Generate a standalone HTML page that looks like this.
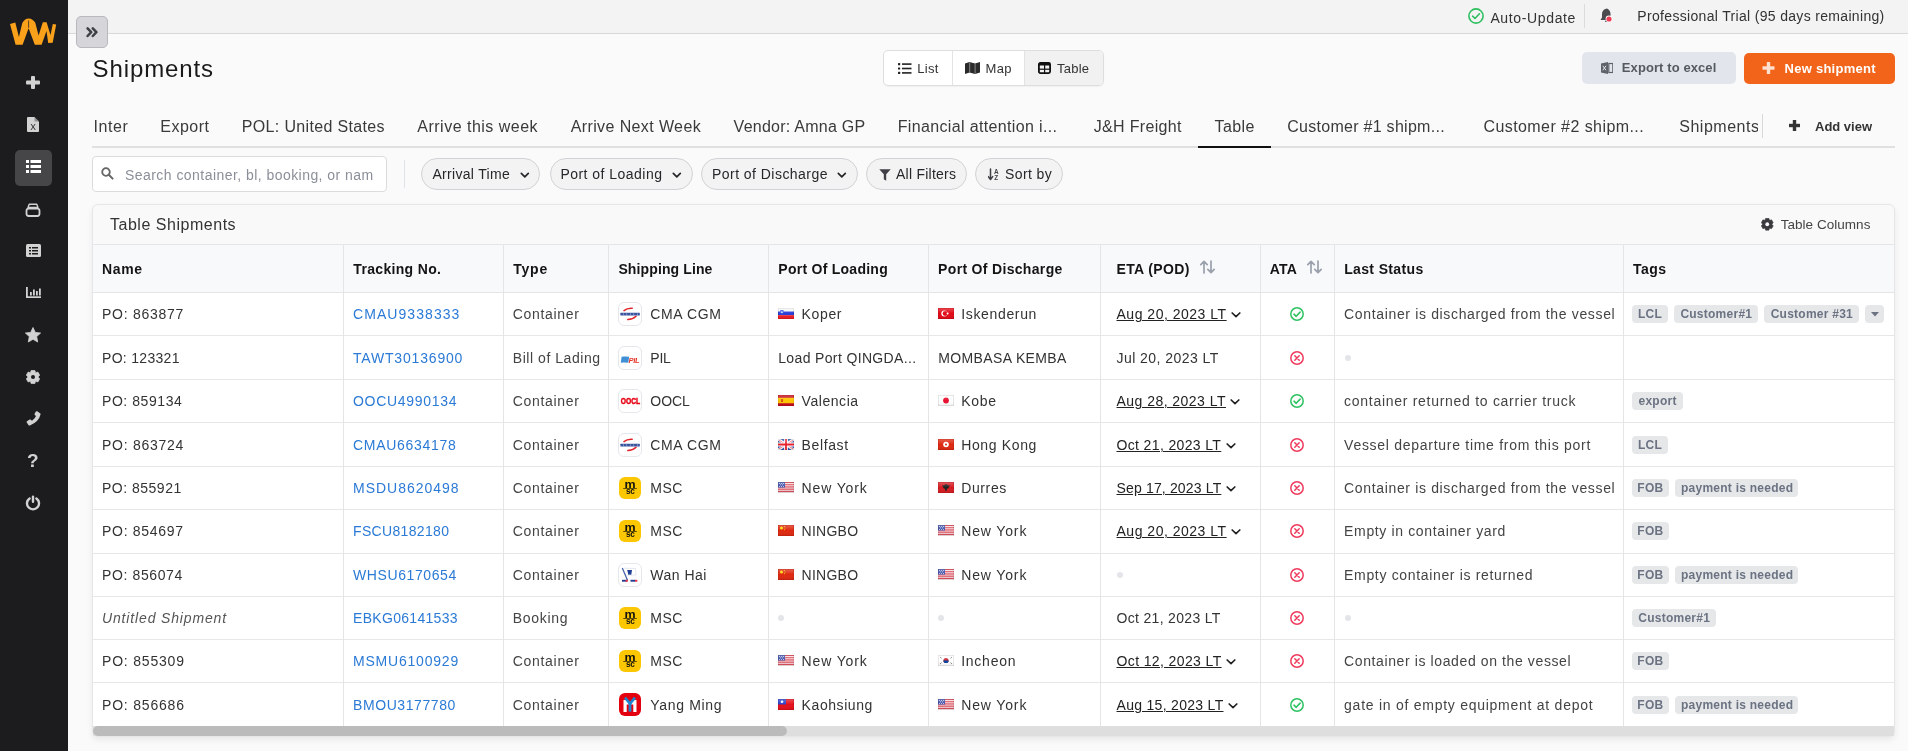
<!DOCTYPE html><html><head><meta charset="utf-8"><title>Shipments</title><style>
html,body{margin:0;padding:0}
body{width:1908px;height:751px;overflow:hidden;position:relative;background:#fafafa;font-family:"Liberation Sans",sans-serif;}
.t{position:absolute;white-space:nowrap}
#wrap{position:absolute;left:0;top:0;width:1908px;height:751px;will-change:transform}
svg{display:block}
</style></head><body><div id="wrap"><svg width="0" height="0" style="position:absolute"><defs><linearGradient id="gl" x1="0" y1="0" x2="0" y2="1"><stop offset="0" stop-color="#fff" stop-opacity="0.25"/><stop offset="0.5" stop-color="#fff" stop-opacity="0"/><stop offset="1" stop-color="#000" stop-opacity="0.08"/></linearGradient></defs></svg>
<div style="position:absolute;left:0px;top:0px;width:68px;height:751px;background:#1c1c1e;"></div>
<svg style="position:absolute;left:0px;top:0px;" width="68" height="60" viewBox="0 0 68 60"><path d="M10 24 L15.3 22.6 L18.9 37 L22.3 23 Q24.5 18.6 28.6 18.4 Q32.8 18.6 35.2 22.6 L38.6 35.6 L42.8 22.2 L46.6 22.2 L50.5 35 L52.8 24 L56.2 24.5 L52.7 42.8 L48.2 43 L46.5 31 L41.6 44.8 L34.8 44.8 L28.6 28.2 L22.6 44.8 L15.6 44.8 Z" fill="#f9a11b"/><path d="M28.6 20.4 V27.8" stroke="#1c1c1e" stroke-width="0.7"/></svg>
<svg style="position:absolute;left:26px;top:76px;" width="14" height="13" viewBox="0 0 14 13"><rect x="5" y="0" width="4" height="13" rx="1" fill="#d2d2d2"/><rect x="0" y="4.5" width="14" height="4" rx="1" fill="#d2d2d2"/></svg>
<svg style="position:absolute;left:27px;top:117px;" width="12" height="15" viewBox="0 0 12 15"><path d="M0 1 Q0 0 1 0 H7.5 L12 4.5 V14 Q12 15 11 15 H1 Q0 15 0 14 Z" fill="#d2d2d2"/><path d="M7.5 0 V4.5 H12" fill="#1c1c1e" opacity="0.35"/><text x="6" y="13" font-size="8.5" text-anchor="middle" fill="#1c1c1e" font-family="Liberation Sans">X</text></svg>
<div style="position:absolute;left:15px;top:150px;width:37px;height:36px;background:#464648;border-radius:5px;"></div>
<svg style="position:absolute;left:26px;top:160px;" width="15" height="13" viewBox="0 0 15 13"><rect x="0" y="0" width="3" height="3" fill="#fff"/><rect x="4.5" y="0" width="10.5" height="3" fill="#fff"/><rect x="0" y="5" width="3" height="3" fill="#fff"/><rect x="4.5" y="5" width="10.5" height="3" fill="#fff"/><rect x="0" y="10" width="3" height="3" fill="#fff"/><rect x="4.5" y="10" width="10.5" height="3" fill="#fff"/></svg>
<svg style="position:absolute;left:25px;top:203px;" width="16" height="14" viewBox="0 0 16 14"><path d="M4.2 1.3 H11.8 L13 4.4 H3 Z" stroke="#d2d2d2" stroke-width="1.4" fill="none" stroke-linejoin="round"/><rect x="1.5" y="5.6" width="13" height="7.4" rx="2.2" stroke="#d2d2d2" stroke-width="1.8" fill="none"/></svg>
<svg style="position:absolute;left:26px;top:244px;" width="15" height="13" viewBox="0 0 15 13"><rect x="0" y="0" width="15" height="13" rx="1.5" fill="#d2d2d2"/><g fill="#1c1c1e"><rect x="3" y="3" width="2" height="1.5"/><rect x="6" y="3" width="6" height="1.5"/><rect x="3" y="6" width="2" height="1.5"/><rect x="6" y="6" width="6" height="1.5"/><rect x="3" y="9" width="2" height="1.5"/><rect x="6" y="9" width="6" height="1.5"/></g></svg>
<svg style="position:absolute;left:26px;top:287px;" width="15" height="11" viewBox="0 0 15 11"><g fill="#d2d2d2"><rect x="0" y="0" width="1.8" height="11"/><rect x="0" y="9.3" width="15" height="1.7"/><rect x="4" y="5" width="1.8" height="3.5"/><rect x="7" y="2.5" width="1.8" height="6"/><rect x="10" y="4" width="1.8" height="4.5"/><rect x="13" y="1.5" width="1.8" height="7"/></g></svg>
<svg style="position:absolute;left:25px;top:327px;" width="16" height="16" viewBox="0 0 16 16"><path d="M8 0.5 L10.3 5.4 L15.6 6 L11.7 9.6 L12.7 15 L8 12.3 L3.3 15 L4.3 9.6 L0.4 6 L5.7 5.4 Z" fill="#d2d2d2" stroke="#d2d2d2" stroke-width="0.8" stroke-linejoin="round"/></svg>
<svg style="position:absolute;left:26px;top:370px;" width="14" height="14" viewBox="0 0 14 14"><polygon points="5.20,0.24 8.80,0.24 9.40,2.16 9.99,2.50 11.96,2.06 13.76,5.18 12.39,6.66 12.39,7.34 13.76,8.82 11.96,11.94 9.99,11.50 9.40,11.84 8.80,13.76 5.20,13.76 4.60,11.84 4.01,11.50 2.04,11.94 0.24,8.82 1.61,7.34 1.61,6.66 0.24,5.18 2.04,2.06 4.01,2.50 4.60,2.16" fill="#d2d2d2" stroke="#d2d2d2" stroke-width="0.6" stroke-linejoin="round"/><circle cx="7" cy="7" r="2" fill="#1c1c1e"/></svg>
<svg style="position:absolute;left:26px;top:411px;" width="15" height="16" viewBox="0 0 15 16"><path d="M14 2.2 L11.2 0.3 Q10.4 -0.1 9.9 0.6 L8.6 2.8 Q8.3 3.5 8.8 4 L10 5 Q9.2 7.6 6 9.8 L4.8 8.7 Q4.2 8.2 3.6 8.6 L1 10.2 Q0.3 10.8 0.8 11.5 L2.6 14.2 Q3.1 14.8 3.9 14.5 Q13 10.5 14.6 3.2 Q14.7 2.6 14 2.2 Z" fill="#d2d2d2"/></svg>
<div class="t" style="left:27px;top:449px;font-size:19px;line-height:24px;font-weight:700;color:#d2d2d2;">?</div>
<svg style="position:absolute;left:25px;top:495px;" width="16" height="16" viewBox="0 0 16 16"><path d="M4.6 3.4 A6 6 0 1 0 11.4 3.4" fill="none" stroke="#d2d2d2" stroke-width="2.4" stroke-linecap="round"/><rect x="6.8" y="0.5" width="2.4" height="7.5" rx="1.2" fill="#d2d2d2"/></svg>
<div style="position:absolute;left:68px;top:0px;width:1840px;height:33px;background:#f3f3f3;border-bottom:1px solid #d8d8d8;"></div>
<div style="position:absolute;left:76px;top:16px;width:30px;height:30px;background:#d6d6da;border:1px solid #b9b9bd;border-radius:5px;"></div>
<svg style="position:absolute;left:85.5px;top:27px;" width="13" height="11" viewBox="0 0 13 11"><path d="M1.6 1.4 L5.2 5.2 L1.6 9 M6.8 1.4 L10.4 5.2 L6.8 9" fill="none" stroke="#3f3f46" stroke-width="2.5" stroke-linecap="round" stroke-linejoin="round"/></svg>
<svg style="position:absolute;left:1468px;top:8px;" width="16" height="16" viewBox="0 0 16 16"><circle cx="8" cy="8" r="7.1" fill="none" stroke="#2fbf5f" stroke-width="1.6"/><path d="M4.6 8.2 L7 10.5 L11.4 5.8" fill="none" stroke="#2fbf5f" stroke-width="1.6" stroke-linecap="round" stroke-linejoin="round"/></svg>
<div class="t" style="left:1490.40px;top:7.65px;font-size:14px;line-height:20px;color:#333;letter-spacing:0.639px;">Auto-Update</div>
<div style="position:absolute;left:1584px;top:4px;width:1px;height:24px;background:#dcdcdc;"></div>
<svg style="position:absolute;left:1600px;top:8px;" width="14" height="16" viewBox="0 0 14 16"><path d="M6 0.8 L7 0.4 Q10.5 2 10.5 6 V9.5 L12 12 H0.5 L2 9.5 V6 Q2 2.2 6 0.8 Z" fill="#4a4a4f"/><rect x="5" y="12.4" width="2.6" height="1.6" rx="0.8" fill="#4a4a4f"/><circle cx="9" cy="11" r="3.4" fill="#fff"/><circle cx="9" cy="11" r="2.6" fill="#ef3c55"/></svg>
<div class="t" style="left:1637.30px;top:6.45px;font-size:14px;line-height:20px;color:#333;letter-spacing:0.324px;">Professional Trial (95 days remaining)</div>
<div class="t" style="left:92.60px;top:51.68px;font-size:24px;line-height:34px;color:#1a1a1a;letter-spacing:0.889px;">Shipments</div>
<div style="position:absolute;left:883px;top:50px;width:219px;height:34px;border:1px solid #dedede;border-radius:5px;background:#fff;overflow:hidden;box-shadow:0 1px 1px rgba(0,0,0,0.04)"><div style="position:absolute;left:68px;top:0;width:1px;height:34px;background:#e3e3e3"></div><div style="position:absolute;left:140px;top:0;width:79px;height:34px;background:#f1f1f1;border-left:1px solid #e3e3e3"></div></div>
<svg style="position:absolute;left:898px;top:63px;" width="14" height="11" viewBox="0 0 14 11"><g fill="#222"><rect x="0" y="0" width="2.2" height="2.2" rx="0.5"/><rect x="0" y="4.4" width="2.2" height="2.2" rx="0.5"/><rect x="0" y="8.8" width="2.2" height="2.2" rx="0.5"/><rect x="4" y="0.3" width="9.5" height="1.6"/><rect x="4" y="4.7" width="9.5" height="1.6"/><rect x="4" y="9.1" width="9.5" height="1.6"/></g></svg>
<div class="t" style="left:917.30px;top:59.50px;font-size:13px;line-height:18px;color:#333;letter-spacing:0.257px;">List</div>
<svg style="position:absolute;left:965px;top:62px;" width="15" height="12" viewBox="0 0 15 12"><path d="M0 1.5 L4.5 0 L10 1.5 L15 0 V10.5 L10 12 L4.5 10.5 L0 12 Z" fill="#2a2a2a"/><rect x="4.2" y="0.5" width="1" height="10.5" fill="#888"/><rect x="9.6" y="1.2" width="1" height="10.5" fill="#888"/></svg>
<div class="t" style="left:985.50px;top:59.50px;font-size:13px;line-height:18px;color:#333;letter-spacing:0.355px;">Map</div>
<svg style="position:absolute;left:1038px;top:62px;" width="13" height="12" viewBox="0 0 13 12"><rect x="0.9" y="0.9" width="11.2" height="10.2" rx="1.5" fill="none" stroke="#111" stroke-width="1.8"/><rect x="0.9" y="0.9" width="11.2" height="2.6" fill="#111"/><rect x="6" y="3" width="1.2" height="8" fill="#111"/><rect x="1" y="6.6" width="11" height="1.2" fill="#111"/></svg>
<div class="t" style="left:1057.00px;top:59.50px;font-size:13px;line-height:18px;color:#333;letter-spacing:0.230px;">Table</div>
<div style="position:absolute;left:1582px;top:52px;width:154px;height:32px;background:#e2e6ec;border-radius:5px;"></div>
<svg style="position:absolute;left:1601px;top:62px;" width="12" height="12" viewBox="0 0 12 12"><path d="M0 1.5 L7 0 V12 L0 10.5 Z" fill="#5f6368"/><path d="M1.8 3.8 L5 8.3 M5 3.8 L1.8 8.3" stroke="#e2e6ec" stroke-width="1"/><rect x="7.8" y="1.5" width="4" height="9" fill="none" stroke="#5f6368" stroke-width="1.2"/></svg>
<div class="t" style="left:1621.80px;top:58.90px;font-size:13px;line-height:18px;color:#555a61;letter-spacing:0.093px;font-weight:700;">Export to excel</div>
<div style="position:absolute;left:1744px;top:53px;width:151px;height:31px;background:#f26419;border-radius:5px;"></div>
<svg style="position:absolute;left:1762px;top:62px;" width="13" height="12" viewBox="0 0 13 12"><rect x="4.8" y="0" width="3.4" height="12" fill="#fde0d0"/><rect x="0.5" y="4.3" width="12" height="3.4" fill="#fde0d0"/></svg>
<div class="t" style="left:1784.50px;top:59.50px;font-size:13px;line-height:18px;color:#fff;letter-spacing:0.261px;font-weight:700;">New shipment</div>
<div style="position:absolute;left:92px;top:146px;width:1803px;height:2px;background:#e0e0e0;"></div>
<div class="t" style="left:93.60px;top:116.46px;font-size:16px;line-height:22px;color:#3a3a3a;letter-spacing:0.546px;">Inter</div>
<div class="t" style="left:160.30px;top:116.46px;font-size:16px;line-height:22px;color:#3a3a3a;letter-spacing:0.492px;">Export</div>
<div class="t" style="left:241.80px;top:116.46px;font-size:16px;line-height:22px;color:#3a3a3a;letter-spacing:0.338px;">POL: United States</div>
<div class="t" style="left:417.30px;top:116.46px;font-size:16px;line-height:22px;color:#3a3a3a;letter-spacing:0.492px;">Arrive this week</div>
<div class="t" style="left:570.70px;top:116.46px;font-size:16px;line-height:22px;color:#3a3a3a;letter-spacing:0.388px;">Arrive Next Week</div>
<div class="t" style="left:733.60px;top:116.46px;font-size:16px;line-height:22px;color:#3a3a3a;letter-spacing:0.251px;">Vendor: Amna GP</div>
<div class="t" style="left:897.70px;top:116.46px;font-size:16px;line-height:22px;color:#3a3a3a;letter-spacing:0.352px;">Financial attention i...</div>
<div class="t" style="left:1093.70px;top:116.46px;font-size:16px;line-height:22px;color:#3a3a3a;letter-spacing:0.333px;">J&amp;H Freight</div>
<div class="t" style="left:1214.60px;top:116.46px;font-size:16px;line-height:22px;color:#3a3a3a;letter-spacing:0.362px;">Table</div>
<div class="t" style="left:1287.20px;top:116.46px;font-size:16px;line-height:22px;color:#3a3a3a;letter-spacing:0.281px;">Customer #1 shipm...</div>
<div class="t" style="left:1483.40px;top:116.46px;font-size:16px;line-height:22px;color:#3a3a3a;letter-spacing:0.434px;">Customer #2 shipm...</div>
<div style="position:absolute;left:1679.3px;top:113px;width:79px;height:26px;overflow:hidden">
<div class="t" style="left:0;top:3.26px;font-size:16px;line-height:22px;color:#3a3a3a;letter-spacing:0.5px">Shipments</div></div>
<div style="position:absolute;left:1198px;top:146px;width:73px;height:2px;background:#111;"></div>
<div style="position:absolute;left:1762px;top:114px;width:1px;height:24px;background:#d9d9d9;"></div>
<svg style="position:absolute;left:1789px;top:120px;" width="11" height="11" viewBox="0 0 11 11"><rect x="3.8" y="0" width="3.4" height="11" fill="#333"/><rect x="0" y="3.8" width="11" height="3.4" fill="#333"/></svg>
<div class="t" style="left:1815.00px;top:117.50px;font-size:13px;line-height:18px;color:#333;letter-spacing:-0.009px;font-weight:700;">Add view</div>
<div style="position:absolute;left:92px;top:156px;width:293px;height:34px;background:#fff;border:1px solid #dcdcdc;border-radius:4px;"></div>
<svg style="position:absolute;left:101px;top:167px;" width="13" height="13" viewBox="0 0 13 13"><circle cx="5" cy="5" r="3.8" fill="none" stroke="#666" stroke-width="1.8"/><path d="M7.8 7.8 L11.6 11.6" stroke="#666" stroke-width="2" stroke-linecap="round"/></svg>
<div style="position:absolute;left:125px;top:160px;width:248px;height:30px;overflow:hidden">
<div class="t" style="left:0;top:5.15px;font-size:14px;line-height:20px;color:#8b8f98;letter-spacing:0.45px">Search container, bl, booking, or name</div></div>
<div style="position:absolute;left:404px;top:160px;width:1px;height:28px;background:#dfe3ea;"></div>
<div style="position:absolute;left:421.0px;top:158px;width:117.4px;height:30px;border:1px solid #d2d2d6;border-radius:16px;background:#f3f3f4"></div>
<div class="t" style="left:432.40px;top:163.95px;font-size:14px;line-height:20px;color:#27272a;letter-spacing:0.309px;">Arrival Time</div>
<svg style="position:absolute;left:519.9px;top:172px;" width="10" height="7" viewBox="0 0 10 7"><path d="M1.3 1.3 L4.8 4.8 L8.3 1.3" fill="none" stroke="#27272a" stroke-width="1.7" stroke-linecap="round" stroke-linejoin="round"/></svg>
<div style="position:absolute;left:549.5px;top:158px;width:141.1px;height:30px;border:1px solid #d2d2d6;border-radius:16px;background:#f3f3f4"></div>
<div class="t" style="left:560.40px;top:163.95px;font-size:14px;line-height:20px;color:#27272a;letter-spacing:0.474px;">Port of Loading</div>
<svg style="position:absolute;left:672.1px;top:172px;" width="10" height="7" viewBox="0 0 10 7"><path d="M1.3 1.3 L4.8 4.8 L8.3 1.3" fill="none" stroke="#27272a" stroke-width="1.7" stroke-linecap="round" stroke-linejoin="round"/></svg>
<div style="position:absolute;left:701.2px;top:158px;width:154.6px;height:30px;border:1px solid #d2d2d6;border-radius:16px;background:#f3f3f4"></div>
<div class="t" style="left:712.00px;top:163.95px;font-size:14px;line-height:20px;color:#27272a;letter-spacing:0.459px;">Port of Discharge</div>
<svg style="position:absolute;left:837.3px;top:172px;" width="10" height="7" viewBox="0 0 10 7"><path d="M1.3 1.3 L4.8 4.8 L8.3 1.3" fill="none" stroke="#27272a" stroke-width="1.7" stroke-linecap="round" stroke-linejoin="round"/></svg>
<div style="position:absolute;left:866.2px;top:158px;width:98.4px;height:30px;border:1px solid #d2d2d6;border-radius:16px;background:#f3f3f4"></div>
<div class="t" style="left:896.00px;top:163.95px;font-size:14px;line-height:20px;color:#27272a;letter-spacing:0.244px;">All Filters</div>
<svg style="position:absolute;left:878.6px;top:168.5px;" width="12" height="12" viewBox="0 0 12 12"><path d="M0.3 0.3 H11.7 L7.2 5.2 V11.7 L4.8 10.2 V5.2 Z" fill="#3f3f46"/></svg>
<div style="position:absolute;left:975.2px;top:158px;width:85.8px;height:30px;border:1px solid #d2d2d6;border-radius:16px;background:#f3f3f4"></div>
<div class="t" style="left:1005.00px;top:163.95px;font-size:14px;line-height:20px;color:#27272a;letter-spacing:0.391px;">Sort by</div>
<svg style="position:absolute;left:987.6px;top:167.5px;" width="11" height="13" viewBox="0 0 11 13"><path d="M2.5 1 V11 M0.3 8.6 L2.5 11.5 L4.7 8.6" fill="none" stroke="#3f3f46" stroke-width="1.5" stroke-linecap="round" stroke-linejoin="round"/><text x="8.2" y="5.6" font-size="6.4" font-weight="700" text-anchor="middle" fill="#3f3f46" font-family="Liberation Sans">A</text><text x="8.2" y="12.3" font-size="6.4" font-weight="700" text-anchor="middle" fill="#3f3f46" font-family="Liberation Sans">Z</text></svg>
<div style="position:absolute;left:92px;top:204px;width:1801px;height:531px;background:#f9f9fa;border:1px solid #e6e6e8;border-radius:6px;box-shadow:0 3px 6px rgba(0,0,0,0.07)"></div>
<div class="t" style="left:110.00px;top:214.46px;font-size:16px;line-height:22px;color:#333;letter-spacing:0.522px;">Table Shipments</div>
<svg style="position:absolute;left:1761px;top:218px;" width="12.5" height="12.5" viewBox="0 0 12.5 12.5"><polygon points="4.60,0.27 7.90,0.27 8.42,1.97 8.87,2.23 10.60,1.83 12.25,4.69 11.04,5.99 11.04,6.51 12.25,7.81 10.60,10.67 8.87,10.27 8.42,10.53 7.90,12.23 4.60,12.23 4.08,10.53 3.63,10.27 1.90,10.67 0.25,7.81 1.46,6.51 1.46,5.99 0.25,4.69 1.90,1.83 3.63,2.23 4.08,1.97" fill="#3a3a3e" stroke="#3a3a3e" stroke-width="0.5" stroke-linejoin="round"/><circle cx="6.25" cy="6.25" r="1.9" fill="#f9f9fa"/></svg>
<div class="t" style="left:1780.70px;top:215.12px;font-size:13.5px;line-height:19px;color:#444;letter-spacing:0.034px;">Table Columns</div>
<div style="position:absolute;left:93px;top:244px;width:1801px;height:1px;background:#e6e6e8;"></div>
<div style="position:absolute;left:93px;top:245px;width:1801px;height:47px;background:#f8f9fb;"></div>
<div style="position:absolute;left:93px;top:292px;width:1801px;height:1px;background:#e4e5e7;"></div>
<div class="t" style="left:102.00px;top:259.15px;font-size:14px;line-height:20px;color:#141414;letter-spacing:0.623px;font-weight:700;">Name</div>
<div class="t" style="left:353.30px;top:259.15px;font-size:14px;line-height:20px;color:#141414;letter-spacing:0.325px;font-weight:700;">Tracking No.</div>
<div class="t" style="left:513.20px;top:259.15px;font-size:14px;line-height:20px;color:#141414;letter-spacing:0.788px;font-weight:700;">Type</div>
<div class="t" style="left:618.40px;top:259.15px;font-size:14px;line-height:20px;color:#141414;letter-spacing:0.121px;font-weight:700;">Shipping Line</div>
<div class="t" style="left:778.30px;top:259.15px;font-size:14px;line-height:20px;color:#141414;letter-spacing:0.260px;font-weight:700;">Port Of Loading</div>
<div class="t" style="left:938.10px;top:259.15px;font-size:14px;line-height:20px;color:#141414;letter-spacing:0.323px;font-weight:700;">Port Of Discharge</div>
<div class="t" style="left:1116.60px;top:259.15px;font-size:14px;line-height:20px;color:#141414;letter-spacing:0.338px;font-weight:700;">ETA (POD)</div>
<div class="t" style="left:1269.80px;top:259.15px;font-size:14px;line-height:20px;color:#141414;letter-spacing:0.203px;font-weight:700;">ATA</div>
<div class="t" style="left:1344.20px;top:259.15px;font-size:14px;line-height:20px;color:#141414;letter-spacing:0.354px;font-weight:700;">Last Status</div>
<div class="t" style="left:1633.00px;top:259.15px;font-size:14px;line-height:20px;color:#141414;letter-spacing:0.454px;font-weight:700;">Tags</div>
<svg style="position:absolute;left:1200px;top:260px;" width="15" height="14" viewBox="0 0 15 14"><path d="M4 13 V1.5 M0.8 4.7 L4 1.3 L7.2 4.7 M11 1 V12.5 M7.8 9.3 L11 12.7 L14.2 9.3" fill="none" stroke="#9aa1ac" stroke-width="1.7" stroke-linecap="round" stroke-linejoin="round"/></svg>
<svg style="position:absolute;left:1307px;top:260px;" width="15" height="14" viewBox="0 0 15 14"><path d="M4 13 V1.5 M0.8 4.7 L4 1.3 L7.2 4.7 M11 1 V12.5 M7.8 9.3 L11 12.7 L14.2 9.3" fill="none" stroke="#9aa1ac" stroke-width="1.7" stroke-linecap="round" stroke-linejoin="round"/></svg>
<div style="position:absolute;left:93px;top:293px;width:1801px;height:434px;background:#fff;"></div>
<div style="position:absolute;left:93px;top:335px;width:1801px;height:1px;background:#e6e7e9;"></div>
<div style="position:absolute;left:93px;top:379px;width:1801px;height:1px;background:#e6e7e9;"></div>
<div style="position:absolute;left:93px;top:422px;width:1801px;height:1px;background:#e6e7e9;"></div>
<div style="position:absolute;left:93px;top:466px;width:1801px;height:1px;background:#e6e7e9;"></div>
<div style="position:absolute;left:93px;top:509px;width:1801px;height:1px;background:#e6e7e9;"></div>
<div style="position:absolute;left:93px;top:553px;width:1801px;height:1px;background:#e6e7e9;"></div>
<div style="position:absolute;left:93px;top:596px;width:1801px;height:1px;background:#e6e7e9;"></div>
<div style="position:absolute;left:93px;top:639px;width:1801px;height:1px;background:#e6e7e9;"></div>
<div style="position:absolute;left:93px;top:682px;width:1801px;height:1px;background:#e6e7e9;"></div>
<div style="position:absolute;left:343px;top:245px;width:1px;height:482px;background:#e4e5e7;"></div>
<div style="position:absolute;left:503px;top:245px;width:1px;height:482px;background:#e4e5e7;"></div>
<div style="position:absolute;left:608px;top:245px;width:1px;height:482px;background:#e4e5e7;"></div>
<div style="position:absolute;left:768px;top:245px;width:1px;height:482px;background:#e4e5e7;"></div>
<div style="position:absolute;left:928px;top:245px;width:1px;height:482px;background:#e4e5e7;"></div>
<div style="position:absolute;left:1100px;top:245px;width:1px;height:482px;background:#e4e5e7;"></div>
<div style="position:absolute;left:1260px;top:245px;width:1px;height:482px;background:#e4e5e7;"></div>
<div style="position:absolute;left:1334px;top:245px;width:1px;height:482px;background:#e4e5e7;"></div>
<div style="position:absolute;left:1623px;top:245px;width:1px;height:482px;background:#e4e5e7;"></div>
<div class="t" style="left:102.00px;top:304.19px;font-size:14px;line-height:20px;color:#333;letter-spacing:0.720px;">PO: 863877</div>
<div class="t" style="left:353.00px;top:304.19px;font-size:14px;line-height:20px;color:#2b7ad6;letter-spacing:1.068px;">CMAU9338333</div>
<div class="t" style="left:512.80px;top:304.19px;font-size:14px;line-height:20px;color:#444;letter-spacing:0.675px;">Container</div>
<div style="position:absolute;left:618px;top:302px;width:22px;height:22px;border-radius:6px;background:#fff;border:1px solid #e5e7eb"></div>
<svg style="position:absolute;left:618px;top:302px;" width="24" height="24" viewBox="3 3 24 24"><path d="M9 11.6 Q12 9 17.2 9.3" fill="none" stroke="#e3262d" stroke-width="1.5" stroke-linecap="round"/><path d="M12.8 20.6 Q18 20.2 21 17.2" fill="none" stroke="#e3262d" stroke-width="1.5" stroke-linecap="round"/><rect x="5.4" y="13.8" width="19.4" height="2.8" rx="0.5" fill="#3a54a0"/><g fill="#fff" opacity="0.55"><rect x="8" y="14.2" width="0.6" height="2"/><rect x="11.5" y="14.2" width="0.6" height="2"/><rect x="15" y="14.2" width="0.6" height="2"/><rect x="18.5" y="14.2" width="0.6" height="2"/><rect x="22" y="14.2" width="0.6" height="2"/></g></svg>
<div class="t" style="left:650.30px;top:304.19px;font-size:14px;line-height:20px;color:#333;letter-spacing:0.635px;">CMA CGM</div>
<svg style="position:absolute;left:778px;top:308px;" width="16" height="11" viewBox="0 0 16 11"><rect width="16" height="3.5" fill="#f6f6f6"/><rect y="3.5" width="16" height="3.7" fill="#2a3fd8"/><rect y="7.2" width="16" height="3.8" fill="#ee1c25"/><path d="M2.2 2 H5.5 V5.2 Q3.85 6.6 2.2 5.2 Z" fill="#3a5ae0"/><path d="M2.6 4.8 L3.85 3 L5.1 4.8 Z" fill="#fff"/><rect x="0.25" y="0.25" width="15.5" height="10.5" fill="url(#gl)" stroke="rgba(0,0,0,0.13)" stroke-width="0.5"/></svg>
<div class="t" style="left:801.60px;top:304.19px;font-size:14px;line-height:20px;color:#333;letter-spacing:0.635px;">Koper</div>
<svg style="position:absolute;left:938px;top:308px;" width="16" height="11" viewBox="0 0 16 11"><rect width="16" height="11" fill="#e30a17"/><circle cx="6.3" cy="5.5" r="3" fill="#fff"/><circle cx="7.1" cy="5.5" r="2.4" fill="#e30a17"/><circle cx="9.6" cy="5.5" r="1" fill="#fff"/><rect x="0.25" y="0.25" width="15.5" height="10.5" fill="url(#gl)" stroke="rgba(0,0,0,0.13)" stroke-width="0.5"/></svg>
<div class="t" style="left:961.20px;top:304.19px;font-size:14px;line-height:20px;color:#333;letter-spacing:0.659px;">Iskenderun</div>
<div class="t" style="left:1116.50px;top:304.19px;font-size:14px;line-height:20px;color:#222;letter-spacing:0.508px;text-decoration:underline;text-underline-offset:1px;">Aug 20, 2023 LT</div>
<svg style="position:absolute;left:1230.7px;top:312px;" width="10" height="6" viewBox="0 0 10 6"><path d="M1.2 1 L5 4.6 L8.8 1" fill="none" stroke="#222" stroke-width="1.7" stroke-linecap="round" stroke-linejoin="round"/></svg>
<svg style="position:absolute;left:1290px;top:307px;" width="14" height="14" viewBox="0 0 14 14"><circle cx="7" cy="7" r="6.2" fill="none" stroke="#2ec262" stroke-width="1.5"/><path d="M4 7.2 L6.2 9.3 L10.1 5.1" fill="none" stroke="#2ec262" stroke-width="1.6" stroke-linecap="round" stroke-linejoin="round"/></svg>
<div class="t" style="left:1344.10px;top:304.19px;font-size:14px;line-height:20px;color:#444;letter-spacing:0.650px;">Container is discharged from the vessel</div>
<div style="position:absolute;left:1632px;top:305px;width:36px;height:18px;background:#e6e7e9;border-radius:4px;"></div>
<div class="t" style="left:1637.99px;top:305.79px;font-size:12px;line-height:17px;color:#6b7383;letter-spacing:0.250px;font-weight:700;">LCL</div>
<div style="position:absolute;left:1674.3px;top:305px;width:83.6px;height:18px;background:#e6e7e9;border-radius:4px;"></div>
<div class="t" style="left:1680.38px;top:305.79px;font-size:12px;line-height:17px;color:#6b7383;letter-spacing:0.250px;font-weight:700;">Customer#1</div>
<div style="position:absolute;left:1764.2px;top:305px;width:94.7px;height:18px;background:#e6e7e9;border-radius:4px;"></div>
<div class="t" style="left:1770.68px;top:305.79px;font-size:12px;line-height:17px;color:#6b7383;letter-spacing:0.250px;font-weight:700;">Customer #31</div>
<div style="position:absolute;left:1865.2px;top:305px;width:18.7px;height:18px;background:#e6e7e9;border-radius:4px;"></div>
<svg style="position:absolute;left:1870.5px;top:312px;" width="8" height="5" viewBox="0 0 8 5"><path d="M0 0 H8 L4 4.5 Z" fill="#6b7383"/></svg>
<div class="t" style="left:102.00px;top:348.19px;font-size:14px;line-height:20px;color:#333;letter-spacing:0.308px;">PO: 123321</div>
<div class="t" style="left:353.00px;top:348.19px;font-size:14px;line-height:20px;color:#2b7ad6;letter-spacing:0.819px;">TAWT30136900</div>
<div class="t" style="left:512.80px;top:348.19px;font-size:14px;line-height:20px;color:#444;letter-spacing:0.541px;">Bill of Lading</div>
<div style="position:absolute;left:618px;top:346px;width:22px;height:22px;border-radius:6px;background:#fff;border:1px solid #e5e7eb"></div>
<svg style="position:absolute;left:618px;top:346px;" width="24" height="24" viewBox="0 0 24 24"><path d="M3.6 10.8 Q6 10.2 8.2 10.6 Q9.6 10.9 11.2 10.6 L10.3 16.6 Q8.6 16.9 7.2 16.6 Q5 16.2 2.8 16.8 Z" fill="#3f8fd6"/><text x="10.6" y="16.9" font-size="7.6" font-weight="700" font-style="italic" fill="#e8382b" font-family="Liberation Sans" letter-spacing="-0.4">PIL</text></svg>
<div class="t" style="left:650.30px;top:348.19px;font-size:14px;line-height:20px;color:#333;letter-spacing:-0.207px;">PIL</div>
<div class="t" style="left:778.20px;top:348.19px;font-size:14px;line-height:20px;color:#333;letter-spacing:0.361px;">Load Port QINGDA...</div>
<div class="t" style="left:938.30px;top:348.19px;font-size:14px;line-height:20px;color:#333;letter-spacing:0.367px;">MOMBASA KEMBA</div>
<div class="t" style="left:1116.50px;top:348.19px;font-size:14px;line-height:20px;color:#333;letter-spacing:0.452px;">Jul 20, 2023 LT</div>
<svg style="position:absolute;left:1290px;top:351px;" width="14" height="14" viewBox="0 0 14 14"><circle cx="7" cy="7" r="6.2" fill="none" stroke="#ef3b5d" stroke-width="1.5"/><path d="M4.8 4.8 L9.2 9.2 M9.2 4.8 L4.8 9.2" fill="none" stroke="#ef3b5d" stroke-width="1.5" stroke-linecap="round"/></svg>
<div style="position:absolute;left:1344.5px;top:355px;width:6px;height:6px;background:#e4e5e8;border-radius:3px;"></div>
<div class="t" style="left:102.00px;top:391.19px;font-size:14px;line-height:20px;color:#333;letter-spacing:0.564px;">PO: 859134</div>
<div class="t" style="left:353.00px;top:391.19px;font-size:14px;line-height:20px;color:#2b7ad6;letter-spacing:0.700px;">OOCU4990134</div>
<div class="t" style="left:512.80px;top:391.19px;font-size:14px;line-height:20px;color:#444;letter-spacing:0.675px;">Container</div>
<div style="position:absolute;left:618px;top:389px;width:22px;height:22px;border-radius:6px;background:#fff;border:1px solid #e5e7eb"></div>
<svg style="position:absolute;left:618px;top:389px;" width="24" height="24" viewBox="0 0 24 24"><text x="0" y="0" font-size="8.4" font-weight="700" fill="#e60012" stroke="#e60012" stroke-width="0.5" font-family="Liberation Sans" transform="translate(2.8 14.9) scale(0.8 1)">OOCL</text></svg>
<div class="t" style="left:650.30px;top:391.19px;font-size:14px;line-height:20px;color:#333;letter-spacing:-0.025px;">OOCL</div>
<svg style="position:absolute;left:778px;top:395px;" width="16" height="11" viewBox="0 0 16 11"><rect width="16" height="11" fill="#c60b1e"/><rect y="2.75" width="16" height="5.5" fill="#ffc400"/><rect x="3" y="4" width="2" height="3" fill="#c60b1e" opacity="0.6"/><rect x="0.25" y="0.25" width="15.5" height="10.5" fill="url(#gl)" stroke="rgba(0,0,0,0.13)" stroke-width="0.5"/></svg>
<div class="t" style="left:801.60px;top:391.19px;font-size:14px;line-height:20px;color:#333;letter-spacing:0.548px;">Valencia</div>
<svg style="position:absolute;left:938px;top:395px;" width="16" height="11" viewBox="0 0 16 11"><rect width="16" height="11" fill="#fff" stroke="#e5e5e5" stroke-width="0.6"/><circle cx="8" cy="5.5" r="2.9" fill="#e8102f"/><rect x="0.25" y="0.25" width="15.5" height="10.5" fill="url(#gl)" stroke="rgba(0,0,0,0.13)" stroke-width="0.5"/></svg>
<div class="t" style="left:961.20px;top:391.19px;font-size:14px;line-height:20px;color:#333;letter-spacing:0.701px;">Kobe</div>
<div class="t" style="left:1116.50px;top:391.19px;font-size:14px;line-height:20px;color:#222;letter-spacing:0.465px;text-decoration:underline;text-underline-offset:1px;">Aug 28, 2023 LT</div>
<svg style="position:absolute;left:1230.1000000000001px;top:399px;" width="10" height="6" viewBox="0 0 10 6"><path d="M1.2 1 L5 4.6 L8.8 1" fill="none" stroke="#222" stroke-width="1.7" stroke-linecap="round" stroke-linejoin="round"/></svg>
<svg style="position:absolute;left:1290px;top:394px;" width="14" height="14" viewBox="0 0 14 14"><circle cx="7" cy="7" r="6.2" fill="none" stroke="#2ec262" stroke-width="1.5"/><path d="M4 7.2 L6.2 9.3 L10.1 5.1" fill="none" stroke="#2ec262" stroke-width="1.6" stroke-linecap="round" stroke-linejoin="round"/></svg>
<div class="t" style="left:1344.10px;top:391.19px;font-size:14px;line-height:20px;color:#444;letter-spacing:0.715px;">container returned to carrier truck</div>
<div style="position:absolute;left:1632px;top:392px;width:50.7px;height:18px;background:#e6e7e9;border-radius:4px;"></div>
<div class="t" style="left:1638.46px;top:392.79px;font-size:12px;line-height:17px;color:#6b7383;letter-spacing:0.250px;font-weight:700;">export</div>
<div class="t" style="left:102.00px;top:435.19px;font-size:14px;line-height:20px;color:#333;letter-spacing:0.720px;">PO: 863724</div>
<div class="t" style="left:353.00px;top:435.19px;font-size:14px;line-height:20px;color:#2b7ad6;letter-spacing:0.718px;">CMAU6634178</div>
<div class="t" style="left:512.80px;top:435.19px;font-size:14px;line-height:20px;color:#444;letter-spacing:0.675px;">Container</div>
<div style="position:absolute;left:618px;top:433px;width:22px;height:22px;border-radius:6px;background:#fff;border:1px solid #e5e7eb"></div>
<svg style="position:absolute;left:618px;top:433px;" width="24" height="24" viewBox="3 3 24 24"><path d="M9 11.6 Q12 9 17.2 9.3" fill="none" stroke="#e3262d" stroke-width="1.5" stroke-linecap="round"/><path d="M12.8 20.6 Q18 20.2 21 17.2" fill="none" stroke="#e3262d" stroke-width="1.5" stroke-linecap="round"/><rect x="5.4" y="13.8" width="19.4" height="2.8" rx="0.5" fill="#3a54a0"/><g fill="#fff" opacity="0.55"><rect x="8" y="14.2" width="0.6" height="2"/><rect x="11.5" y="14.2" width="0.6" height="2"/><rect x="15" y="14.2" width="0.6" height="2"/><rect x="18.5" y="14.2" width="0.6" height="2"/><rect x="22" y="14.2" width="0.6" height="2"/></g></svg>
<div class="t" style="left:650.30px;top:435.19px;font-size:14px;line-height:20px;color:#333;letter-spacing:0.635px;">CMA CGM</div>
<svg style="position:absolute;left:778px;top:439px;" width="16" height="11" viewBox="0 0 16 11"><rect width="16" height="11" fill="#3557b0"/><path d="M0 0 L16 11 M16 0 L0 11" stroke="#fff" stroke-width="2.6"/><path d="M1 1 L6 4.5 M15 1 L10 4.5 M1 10 L6 6.5 M15 10 L10 6.5" stroke="#e8404a" stroke-width="0.8"/><path d="M8 0 V11 M0 5.5 H16" stroke="#fff" stroke-width="3.8"/><path d="M8 0 V11 M0 5.5 H16" stroke="#e8202f" stroke-width="1.8"/><rect x="0.25" y="0.25" width="15.5" height="10.5" fill="url(#gl)" stroke="rgba(0,0,0,0.13)" stroke-width="0.5"/></svg>
<div class="t" style="left:801.60px;top:435.19px;font-size:14px;line-height:20px;color:#333;letter-spacing:0.617px;">Belfast</div>
<svg style="position:absolute;left:938px;top:439px;" width="16" height="11" viewBox="0 0 16 11"><rect width="16" height="11" fill="#de2910"/><circle cx="8" cy="5.5" r="2.8" fill="#fff"/><circle cx="8" cy="5.5" r="1" fill="#de2910"/><rect x="0.25" y="0.25" width="15.5" height="10.5" fill="url(#gl)" stroke="rgba(0,0,0,0.13)" stroke-width="0.5"/></svg>
<div class="t" style="left:961.20px;top:435.19px;font-size:14px;line-height:20px;color:#333;letter-spacing:0.643px;">Hong Kong</div>
<div class="t" style="left:1116.50px;top:435.19px;font-size:14px;line-height:20px;color:#222;letter-spacing:0.360px;text-decoration:underline;text-underline-offset:1px;">Oct 21, 2023 LT</div>
<svg style="position:absolute;left:1225.5px;top:443px;" width="10" height="6" viewBox="0 0 10 6"><path d="M1.2 1 L5 4.6 L8.8 1" fill="none" stroke="#222" stroke-width="1.7" stroke-linecap="round" stroke-linejoin="round"/></svg>
<svg style="position:absolute;left:1290px;top:438px;" width="14" height="14" viewBox="0 0 14 14"><circle cx="7" cy="7" r="6.2" fill="none" stroke="#ef3b5d" stroke-width="1.5"/><path d="M4.8 4.8 L9.2 9.2 M9.2 4.8 L4.8 9.2" fill="none" stroke="#ef3b5d" stroke-width="1.5" stroke-linecap="round"/></svg>
<div class="t" style="left:1344.10px;top:435.19px;font-size:14px;line-height:20px;color:#444;letter-spacing:0.720px;">Vessel departure time from this port</div>
<div style="position:absolute;left:1632px;top:436px;width:36px;height:18px;background:#e6e7e9;border-radius:4px;"></div>
<div class="t" style="left:1637.99px;top:436.79px;font-size:12px;line-height:17px;color:#6b7383;letter-spacing:0.250px;font-weight:700;">LCL</div>
<div class="t" style="left:102.00px;top:478.19px;font-size:14px;line-height:20px;color:#333;letter-spacing:0.497px;">PO: 855921</div>
<div class="t" style="left:353.00px;top:478.19px;font-size:14px;line-height:20px;color:#2b7ad6;letter-spacing:0.978px;">MSDU8620498</div>
<div class="t" style="left:512.80px;top:478.19px;font-size:14px;line-height:20px;color:#444;letter-spacing:0.675px;">Container</div>
<div style="position:absolute;left:619px;top:477px;width:22px;height:22px;border-radius:6px;background:#fcc600;"></div>
<svg style="position:absolute;left:619px;top:477px;" width="22" height="22" viewBox="0 0 22 22"><text x="11" y="11" font-size="10" font-weight="700" text-anchor="middle" fill="#111" font-family="Liberation Sans" transform="translate(11 0) scale(1.25 1) translate(-11 0)">m</text><text x="11.2" y="17" font-size="8.2" font-weight="700" text-anchor="middle" fill="#111" font-family="Liberation Sans" letter-spacing="-0.3">sc</text><rect x="4.2" y="11.2" width="13.6" height="0.8" fill="#3a3000"/></svg>
<div class="t" style="left:650.30px;top:478.19px;font-size:14px;line-height:20px;color:#333;letter-spacing:0.445px;">MSC</div>
<svg style="position:absolute;left:778px;top:482px;" width="16" height="11" viewBox="0 0 16 11"><rect width="16" height="11" fill="#fff"/><rect y="0.00" width="16" height="0.95" fill="#d22f3f"/><rect y="1.83" width="16" height="0.95" fill="#d22f3f"/><rect y="3.66" width="16" height="0.95" fill="#d22f3f"/><rect y="5.49" width="16" height="0.95" fill="#d22f3f"/><rect y="7.32" width="16" height="0.95" fill="#d22f3f"/><rect y="9.15" width="16" height="0.95" fill="#d22f3f"/><rect width="7" height="5.5" fill="#3d4ea8"/><g fill="#fff" opacity="0.8"><rect x="1" y="1" width="1" height="0.8"/><rect x="3" y="1" width="1" height="0.8"/><rect x="5" y="1" width="1" height="0.8"/><rect x="2" y="2.5" width="1" height="0.8"/><rect x="4" y="2.5" width="1" height="0.8"/><rect x="1" y="4" width="1" height="0.8"/><rect x="3" y="4" width="1" height="0.8"/><rect x="5" y="4" width="1" height="0.8"/></g><rect x="0.25" y="0.25" width="15.5" height="10.5" fill="url(#gl)" stroke="rgba(0,0,0,0.13)" stroke-width="0.5"/></svg>
<div class="t" style="left:801.60px;top:478.19px;font-size:14px;line-height:20px;color:#333;letter-spacing:0.851px;">New York</div>
<svg style="position:absolute;left:938px;top:482px;" width="16" height="11" viewBox="0 0 16 11"><rect width="16" height="11" fill="#d61c23"/><path d="M8 2 L10.5 3.5 L12 3 L10.5 6 L9 7 L8.5 9 L7.5 9 L7 7 L5.5 6 L4 3 L5.5 3.5 Z" fill="#222"/><rect x="0.25" y="0.25" width="15.5" height="10.5" fill="url(#gl)" stroke="rgba(0,0,0,0.13)" stroke-width="0.5"/></svg>
<div class="t" style="left:961.20px;top:478.19px;font-size:14px;line-height:20px;color:#333;letter-spacing:0.619px;">Durres</div>
<div class="t" style="left:1116.50px;top:478.19px;font-size:14px;line-height:20px;color:#222;letter-spacing:0.158px;text-decoration:underline;text-underline-offset:1px;">Sep 17, 2023 LT</div>
<svg style="position:absolute;left:1225.8000000000002px;top:486px;" width="10" height="6" viewBox="0 0 10 6"><path d="M1.2 1 L5 4.6 L8.8 1" fill="none" stroke="#222" stroke-width="1.7" stroke-linecap="round" stroke-linejoin="round"/></svg>
<svg style="position:absolute;left:1290px;top:481px;" width="14" height="14" viewBox="0 0 14 14"><circle cx="7" cy="7" r="6.2" fill="none" stroke="#ef3b5d" stroke-width="1.5"/><path d="M4.8 4.8 L9.2 9.2 M9.2 4.8 L4.8 9.2" fill="none" stroke="#ef3b5d" stroke-width="1.5" stroke-linecap="round"/></svg>
<div class="t" style="left:1344.10px;top:478.19px;font-size:14px;line-height:20px;color:#444;letter-spacing:0.650px;">Container is discharged from the vessel</div>
<div style="position:absolute;left:1632px;top:479px;width:36.8px;height:18px;background:#e6e7e9;border-radius:4px;"></div>
<div class="t" style="left:1637.35px;top:479.79px;font-size:12px;line-height:17px;color:#6b7383;letter-spacing:0.250px;font-weight:700;">FOB</div>
<div style="position:absolute;left:1675.1px;top:479px;width:123px;height:18px;background:#e6e7e9;border-radius:4px;"></div>
<div class="t" style="left:1680.96px;top:479.79px;font-size:12px;line-height:17px;color:#6b7383;letter-spacing:0.250px;font-weight:700;">payment is needed</div>
<div class="t" style="left:102.00px;top:521.19px;font-size:14px;line-height:20px;color:#333;letter-spacing:0.708px;">PO: 854697</div>
<div class="t" style="left:353.00px;top:521.19px;font-size:14px;line-height:20px;color:#2b7ad6;letter-spacing:0.339px;">FSCU8182180</div>
<div class="t" style="left:512.80px;top:521.19px;font-size:14px;line-height:20px;color:#444;letter-spacing:0.687px;">Container</div>
<div style="position:absolute;left:619px;top:520px;width:22px;height:22px;border-radius:6px;background:#fcc600;"></div>
<svg style="position:absolute;left:619px;top:520px;" width="22" height="22" viewBox="0 0 22 22"><text x="11" y="11" font-size="10" font-weight="700" text-anchor="middle" fill="#111" font-family="Liberation Sans" transform="translate(11 0) scale(1.25 1) translate(-11 0)">m</text><text x="11.2" y="17" font-size="8.2" font-weight="700" text-anchor="middle" fill="#111" font-family="Liberation Sans" letter-spacing="-0.3">sc</text><rect x="4.2" y="11.2" width="13.6" height="0.8" fill="#3a3000"/></svg>
<div class="t" style="left:650.30px;top:521.19px;font-size:14px;line-height:20px;color:#333;letter-spacing:0.445px;">MSC</div>
<svg style="position:absolute;left:778px;top:525px;" width="16" height="11" viewBox="0 0 16 11"><rect width="16" height="11" fill="#de2910"/><circle cx="3.5" cy="3" r="1.5" fill="#ffde00"/><circle cx="6.3" cy="1.5" r="0.5" fill="#ffde00"/><circle cx="7" cy="3" r="0.5" fill="#ffde00"/><circle cx="6.5" cy="4.8" r="0.5" fill="#ffde00"/><rect x="0.25" y="0.25" width="15.5" height="10.5" fill="url(#gl)" stroke="rgba(0,0,0,0.13)" stroke-width="0.5"/></svg>
<div class="t" style="left:801.60px;top:521.19px;font-size:14px;line-height:20px;color:#333;letter-spacing:0.254px;">NINGBO</div>
<svg style="position:absolute;left:938px;top:525px;" width="16" height="11" viewBox="0 0 16 11"><rect width="16" height="11" fill="#fff"/><rect y="0.00" width="16" height="0.95" fill="#d22f3f"/><rect y="1.83" width="16" height="0.95" fill="#d22f3f"/><rect y="3.66" width="16" height="0.95" fill="#d22f3f"/><rect y="5.49" width="16" height="0.95" fill="#d22f3f"/><rect y="7.32" width="16" height="0.95" fill="#d22f3f"/><rect y="9.15" width="16" height="0.95" fill="#d22f3f"/><rect width="7" height="5.5" fill="#3d4ea8"/><g fill="#fff" opacity="0.8"><rect x="1" y="1" width="1" height="0.8"/><rect x="3" y="1" width="1" height="0.8"/><rect x="5" y="1" width="1" height="0.8"/><rect x="2" y="2.5" width="1" height="0.8"/><rect x="4" y="2.5" width="1" height="0.8"/><rect x="1" y="4" width="1" height="0.8"/><rect x="3" y="4" width="1" height="0.8"/><rect x="5" y="4" width="1" height="0.8"/></g><rect x="0.25" y="0.25" width="15.5" height="10.5" fill="url(#gl)" stroke="rgba(0,0,0,0.13)" stroke-width="0.5"/></svg>
<div class="t" style="left:961.20px;top:521.19px;font-size:14px;line-height:20px;color:#333;letter-spacing:0.865px;">New York</div>
<div class="t" style="left:1116.50px;top:521.19px;font-size:14px;line-height:20px;color:#222;letter-spacing:0.508px;text-decoration:underline;text-underline-offset:1px;">Aug 20, 2023 LT</div>
<svg style="position:absolute;left:1230.7px;top:529px;" width="10" height="6" viewBox="0 0 10 6"><path d="M1.2 1 L5 4.6 L8.8 1" fill="none" stroke="#222" stroke-width="1.7" stroke-linecap="round" stroke-linejoin="round"/></svg>
<svg style="position:absolute;left:1290px;top:524px;" width="14" height="14" viewBox="0 0 14 14"><circle cx="7" cy="7" r="6.2" fill="none" stroke="#ef3b5d" stroke-width="1.5"/><path d="M4.8 4.8 L9.2 9.2 M9.2 4.8 L4.8 9.2" fill="none" stroke="#ef3b5d" stroke-width="1.5" stroke-linecap="round"/></svg>
<div class="t" style="left:1344.10px;top:521.19px;font-size:14px;line-height:20px;color:#444;letter-spacing:0.642px;">Empty in container yard</div>
<div style="position:absolute;left:1632px;top:522px;width:36.8px;height:18px;background:#e6e7e9;border-radius:4px;"></div>
<div class="t" style="left:1637.35px;top:522.79px;font-size:12px;line-height:17px;color:#6b7383;letter-spacing:0.250px;font-weight:700;">FOB</div>
<div class="t" style="left:102.00px;top:565.19px;font-size:14px;line-height:20px;color:#333;letter-spacing:0.620px;">PO: 856074</div>
<div class="t" style="left:353.00px;top:565.19px;font-size:14px;line-height:20px;color:#2b7ad6;letter-spacing:0.592px;">WHSU6170654</div>
<div class="t" style="left:512.80px;top:565.19px;font-size:14px;line-height:20px;color:#444;letter-spacing:0.687px;">Container</div>
<div style="position:absolute;left:618px;top:563px;width:22px;height:22px;border-radius:6px;background:#fff;border:1px solid #e5e7eb"></div>
<svg style="position:absolute;left:618px;top:563px;" width="24" height="24" viewBox="0 0 24 24"><path d="M4.3 5 L9.6 17.6" stroke="#2a4a9a" stroke-width="1.3" opacity="0.85"/><path d="M6 5.2 L17.5 5.5 L18.2 12 L9 12.3" fill="none" stroke="#c8d0e0" stroke-width="0.5"/><path d="M9.2 7 L10.4 11.8 L11.6 9.4 L12.8 11.8 L14 7 Z" fill="#1f3f93"/><rect x="10.2" y="7" width="3.2" height="4.6" fill="#1f3f93"/><g fill="#1f3f93"><rect x="4" y="16.8" width="5" height="1.9"/><rect x="12.5" y="16.8" width="5" height="1.9"/></g><rect x="7.5" y="16.8" width="2.4" height="1.9" fill="#e8344a"/><rect x="17" y="16.8" width="2.4" height="1.9" fill="#e8344a"/></svg>
<div class="t" style="left:650.30px;top:565.19px;font-size:14px;line-height:20px;color:#333;letter-spacing:0.489px;">Wan Hai</div>
<svg style="position:absolute;left:778px;top:569px;" width="16" height="11" viewBox="0 0 16 11"><rect width="16" height="11" fill="#de2910"/><circle cx="3.5" cy="3" r="1.5" fill="#ffde00"/><circle cx="6.3" cy="1.5" r="0.5" fill="#ffde00"/><circle cx="7" cy="3" r="0.5" fill="#ffde00"/><circle cx="6.5" cy="4.8" r="0.5" fill="#ffde00"/><rect x="0.25" y="0.25" width="15.5" height="10.5" fill="url(#gl)" stroke="rgba(0,0,0,0.13)" stroke-width="0.5"/></svg>
<div class="t" style="left:801.60px;top:565.19px;font-size:14px;line-height:20px;color:#333;letter-spacing:0.254px;">NINGBO</div>
<svg style="position:absolute;left:938px;top:569px;" width="16" height="11" viewBox="0 0 16 11"><rect width="16" height="11" fill="#fff"/><rect y="0.00" width="16" height="0.95" fill="#d22f3f"/><rect y="1.83" width="16" height="0.95" fill="#d22f3f"/><rect y="3.66" width="16" height="0.95" fill="#d22f3f"/><rect y="5.49" width="16" height="0.95" fill="#d22f3f"/><rect y="7.32" width="16" height="0.95" fill="#d22f3f"/><rect y="9.15" width="16" height="0.95" fill="#d22f3f"/><rect width="7" height="5.5" fill="#3d4ea8"/><g fill="#fff" opacity="0.8"><rect x="1" y="1" width="1" height="0.8"/><rect x="3" y="1" width="1" height="0.8"/><rect x="5" y="1" width="1" height="0.8"/><rect x="2" y="2.5" width="1" height="0.8"/><rect x="4" y="2.5" width="1" height="0.8"/><rect x="1" y="4" width="1" height="0.8"/><rect x="3" y="4" width="1" height="0.8"/><rect x="5" y="4" width="1" height="0.8"/></g><rect x="0.25" y="0.25" width="15.5" height="10.5" fill="url(#gl)" stroke="rgba(0,0,0,0.13)" stroke-width="0.5"/></svg>
<div class="t" style="left:961.20px;top:565.19px;font-size:14px;line-height:20px;color:#333;letter-spacing:0.865px;">New York</div>
<div style="position:absolute;left:1116.9px;top:572px;width:6px;height:6px;background:#e4e5e8;border-radius:3px;"></div>
<svg style="position:absolute;left:1290px;top:568px;" width="14" height="14" viewBox="0 0 14 14"><circle cx="7" cy="7" r="6.2" fill="none" stroke="#ef3b5d" stroke-width="1.5"/><path d="M4.8 4.8 L9.2 9.2 M9.2 4.8 L4.8 9.2" fill="none" stroke="#ef3b5d" stroke-width="1.5" stroke-linecap="round"/></svg>
<div class="t" style="left:1344.10px;top:565.19px;font-size:14px;line-height:20px;color:#444;letter-spacing:0.662px;">Empty container is returned</div>
<div style="position:absolute;left:1632px;top:566px;width:36.8px;height:18px;background:#e6e7e9;border-radius:4px;"></div>
<div class="t" style="left:1637.35px;top:566.79px;font-size:12px;line-height:17px;color:#6b7383;letter-spacing:0.250px;font-weight:700;">FOB</div>
<div style="position:absolute;left:1675.1px;top:566px;width:123px;height:18px;background:#e6e7e9;border-radius:4px;"></div>
<div class="t" style="left:1680.96px;top:566.79px;font-size:12px;line-height:17px;color:#6b7383;letter-spacing:0.250px;font-weight:700;">payment is needed</div>
<div class="t" style="left:102.00px;top:608.19px;font-size:14px;line-height:20px;color:#555;letter-spacing:0.850px;font-style:italic;">Untitled Shipment</div>
<div class="t" style="left:353.00px;top:608.19px;font-size:14px;line-height:20px;color:#2b7ad6;letter-spacing:0.310px;">EBKG06141533</div>
<div class="t" style="left:512.80px;top:608.19px;font-size:14px;line-height:20px;color:#444;letter-spacing:0.684px;">Booking</div>
<div style="position:absolute;left:619px;top:607px;width:22px;height:22px;border-radius:6px;background:#fcc600;"></div>
<svg style="position:absolute;left:619px;top:607px;" width="22" height="22" viewBox="0 0 22 22"><text x="11" y="11" font-size="10" font-weight="700" text-anchor="middle" fill="#111" font-family="Liberation Sans" transform="translate(11 0) scale(1.25 1) translate(-11 0)">m</text><text x="11.2" y="17" font-size="8.2" font-weight="700" text-anchor="middle" fill="#111" font-family="Liberation Sans" letter-spacing="-0.3">sc</text><rect x="4.2" y="11.2" width="13.6" height="0.8" fill="#3a3000"/></svg>
<div class="t" style="left:650.30px;top:608.19px;font-size:14px;line-height:20px;color:#333;letter-spacing:0.445px;">MSC</div>
<div style="position:absolute;left:778.4px;top:615px;width:6px;height:6px;background:#e4e5e8;border-radius:3px;"></div>
<div style="position:absolute;left:938.1px;top:615px;width:6px;height:6px;background:#e4e5e8;border-radius:3px;"></div>
<div class="t" style="left:1116.50px;top:608.19px;font-size:14px;line-height:20px;color:#333;letter-spacing:0.318px;">Oct 21, 2023 LT</div>
<svg style="position:absolute;left:1290px;top:611px;" width="14" height="14" viewBox="0 0 14 14"><circle cx="7" cy="7" r="6.2" fill="none" stroke="#ef3b5d" stroke-width="1.5"/><path d="M4.8 4.8 L9.2 9.2 M9.2 4.8 L4.8 9.2" fill="none" stroke="#ef3b5d" stroke-width="1.5" stroke-linecap="round"/></svg>
<div style="position:absolute;left:1344.5px;top:615px;width:6px;height:6px;background:#e4e5e8;border-radius:3px;"></div>
<div style="position:absolute;left:1632px;top:609px;width:84px;height:18px;background:#e6e7e9;border-radius:4px;"></div>
<div class="t" style="left:1638.28px;top:609.79px;font-size:12px;line-height:17px;color:#6b7383;letter-spacing:0.250px;font-weight:700;">Customer#1</div>
<div class="t" style="left:102.00px;top:651.19px;font-size:14px;line-height:20px;color:#333;letter-spacing:0.808px;">PO: 855309</div>
<div class="t" style="left:353.00px;top:651.19px;font-size:14px;line-height:20px;color:#2b7ad6;letter-spacing:0.792px;">MSMU6100929</div>
<div class="t" style="left:512.80px;top:651.19px;font-size:14px;line-height:20px;color:#444;letter-spacing:0.687px;">Container</div>
<div style="position:absolute;left:619px;top:650px;width:22px;height:22px;border-radius:6px;background:#fcc600;"></div>
<svg style="position:absolute;left:619px;top:650px;" width="22" height="22" viewBox="0 0 22 22"><text x="11" y="11" font-size="10" font-weight="700" text-anchor="middle" fill="#111" font-family="Liberation Sans" transform="translate(11 0) scale(1.25 1) translate(-11 0)">m</text><text x="11.2" y="17" font-size="8.2" font-weight="700" text-anchor="middle" fill="#111" font-family="Liberation Sans" letter-spacing="-0.3">sc</text><rect x="4.2" y="11.2" width="13.6" height="0.8" fill="#3a3000"/></svg>
<div class="t" style="left:650.30px;top:651.19px;font-size:14px;line-height:20px;color:#333;letter-spacing:0.445px;">MSC</div>
<svg style="position:absolute;left:778px;top:655px;" width="16" height="11" viewBox="0 0 16 11"><rect width="16" height="11" fill="#fff"/><rect y="0.00" width="16" height="0.95" fill="#d22f3f"/><rect y="1.83" width="16" height="0.95" fill="#d22f3f"/><rect y="3.66" width="16" height="0.95" fill="#d22f3f"/><rect y="5.49" width="16" height="0.95" fill="#d22f3f"/><rect y="7.32" width="16" height="0.95" fill="#d22f3f"/><rect y="9.15" width="16" height="0.95" fill="#d22f3f"/><rect width="7" height="5.5" fill="#3d4ea8"/><g fill="#fff" opacity="0.8"><rect x="1" y="1" width="1" height="0.8"/><rect x="3" y="1" width="1" height="0.8"/><rect x="5" y="1" width="1" height="0.8"/><rect x="2" y="2.5" width="1" height="0.8"/><rect x="4" y="2.5" width="1" height="0.8"/><rect x="1" y="4" width="1" height="0.8"/><rect x="3" y="4" width="1" height="0.8"/><rect x="5" y="4" width="1" height="0.8"/></g><rect x="0.25" y="0.25" width="15.5" height="10.5" fill="url(#gl)" stroke="rgba(0,0,0,0.13)" stroke-width="0.5"/></svg>
<div class="t" style="left:801.60px;top:651.19px;font-size:14px;line-height:20px;color:#333;letter-spacing:0.851px;">New York</div>
<svg style="position:absolute;left:938px;top:655px;" width="16" height="11" viewBox="0 0 16 11"><rect width="16" height="11" fill="#fff" stroke="#e5e5e5" stroke-width="0.6"/><circle cx="8" cy="5.5" r="2.6" fill="#cd2e3a"/><path d="M5.4 5.5 A2.6 2.6 0 0 0 10.6 5.5 Z" fill="#0047a0"/><g stroke="#333" stroke-width="0.6"><path d="M2 2 L3.5 3.3 M12.5 7.7 L14 9 M2 9 L3.5 7.7 M12.5 3.3 L14 2"/></g><rect x="0.25" y="0.25" width="15.5" height="10.5" fill="url(#gl)" stroke="rgba(0,0,0,0.13)" stroke-width="0.5"/></svg>
<div class="t" style="left:961.20px;top:651.19px;font-size:14px;line-height:20px;color:#333;letter-spacing:0.747px;">Incheon</div>
<div class="t" style="left:1116.50px;top:651.19px;font-size:14px;line-height:20px;color:#222;letter-spacing:0.382px;text-decoration:underline;text-underline-offset:1px;">Oct 12, 2023 LT</div>
<svg style="position:absolute;left:1225.8000000000002px;top:659px;" width="10" height="6" viewBox="0 0 10 6"><path d="M1.2 1 L5 4.6 L8.8 1" fill="none" stroke="#222" stroke-width="1.7" stroke-linecap="round" stroke-linejoin="round"/></svg>
<svg style="position:absolute;left:1290px;top:654px;" width="14" height="14" viewBox="0 0 14 14"><circle cx="7" cy="7" r="6.2" fill="none" stroke="#ef3b5d" stroke-width="1.5"/><path d="M4.8 4.8 L9.2 9.2 M9.2 4.8 L4.8 9.2" fill="none" stroke="#ef3b5d" stroke-width="1.5" stroke-linecap="round"/></svg>
<div class="t" style="left:1344.10px;top:651.19px;font-size:14px;line-height:20px;color:#444;letter-spacing:0.609px;">Container is loaded on the vessel</div>
<div style="position:absolute;left:1632px;top:652px;width:36.8px;height:18px;background:#e6e7e9;border-radius:4px;"></div>
<div class="t" style="left:1637.35px;top:652.79px;font-size:12px;line-height:17px;color:#6b7383;letter-spacing:0.250px;font-weight:700;">FOB</div>
<div class="t" style="left:102.00px;top:695.19px;font-size:14px;line-height:20px;color:#333;letter-spacing:0.808px;">PO: 856686</div>
<div class="t" style="left:353.00px;top:695.19px;font-size:14px;line-height:20px;color:#2b7ad6;letter-spacing:0.580px;">BMOU3177780</div>
<div class="t" style="left:512.80px;top:695.19px;font-size:14px;line-height:20px;color:#444;letter-spacing:0.687px;">Container</div>
<div style="position:absolute;left:619px;top:693px;width:22px;height:22.5px;border-radius:6px;background:#e3000f;"></div>
<svg style="position:absolute;left:618px;top:693px;" width="24" height="24" viewBox="0 0 24 24"><path d="M5.5 7 H8.5 L12 12 L15.5 7 H18.5 V19 H15.3 V11.5 H8.7 V19 H5.5 Z" fill="#fff"/><path d="M7 4.6 L12 10.6 L17 4.6" fill="none" stroke="#1d86d0" stroke-width="2.6" stroke-linejoin="miter"/><rect x="10.6" y="10" width="2.8" height="8.6" fill="#1d86d0"/></svg>
<div class="t" style="left:650.30px;top:695.19px;font-size:14px;line-height:20px;color:#333;letter-spacing:0.676px;">Yang Ming</div>
<svg style="position:absolute;left:778px;top:699px;" width="16" height="11" viewBox="0 0 16 11"><rect width="16" height="11" fill="#e4101b"/><rect width="8" height="5.5" fill="#2a40c8"/><circle cx="4" cy="2.75" r="1.3" fill="#fff"/><rect x="0.25" y="0.25" width="15.5" height="10.5" fill="url(#gl)" stroke="rgba(0,0,0,0.13)" stroke-width="0.5"/></svg>
<div class="t" style="left:801.60px;top:695.19px;font-size:14px;line-height:20px;color:#333;letter-spacing:0.579px;">Kaohsiung</div>
<svg style="position:absolute;left:938px;top:699px;" width="16" height="11" viewBox="0 0 16 11"><rect width="16" height="11" fill="#fff"/><rect y="0.00" width="16" height="0.95" fill="#d22f3f"/><rect y="1.83" width="16" height="0.95" fill="#d22f3f"/><rect y="3.66" width="16" height="0.95" fill="#d22f3f"/><rect y="5.49" width="16" height="0.95" fill="#d22f3f"/><rect y="7.32" width="16" height="0.95" fill="#d22f3f"/><rect y="9.15" width="16" height="0.95" fill="#d22f3f"/><rect width="7" height="5.5" fill="#3d4ea8"/><g fill="#fff" opacity="0.8"><rect x="1" y="1" width="1" height="0.8"/><rect x="3" y="1" width="1" height="0.8"/><rect x="5" y="1" width="1" height="0.8"/><rect x="2" y="2.5" width="1" height="0.8"/><rect x="4" y="2.5" width="1" height="0.8"/><rect x="1" y="4" width="1" height="0.8"/><rect x="3" y="4" width="1" height="0.8"/><rect x="5" y="4" width="1" height="0.8"/></g><rect x="0.25" y="0.25" width="15.5" height="10.5" fill="url(#gl)" stroke="rgba(0,0,0,0.13)" stroke-width="0.5"/></svg>
<div class="t" style="left:961.20px;top:695.19px;font-size:14px;line-height:20px;color:#333;letter-spacing:0.865px;">New York</div>
<div class="t" style="left:1116.50px;top:695.19px;font-size:14px;line-height:20px;color:#222;letter-spacing:0.301px;text-decoration:underline;text-underline-offset:1px;">Aug 15, 2023 LT</div>
<svg style="position:absolute;left:1227.8000000000002px;top:703px;" width="10" height="6" viewBox="0 0 10 6"><path d="M1.2 1 L5 4.6 L8.8 1" fill="none" stroke="#222" stroke-width="1.7" stroke-linecap="round" stroke-linejoin="round"/></svg>
<svg style="position:absolute;left:1290px;top:698px;" width="14" height="14" viewBox="0 0 14 14"><circle cx="7" cy="7" r="6.2" fill="none" stroke="#2ec262" stroke-width="1.5"/><path d="M4 7.2 L6.2 9.3 L10.1 5.1" fill="none" stroke="#2ec262" stroke-width="1.6" stroke-linecap="round" stroke-linejoin="round"/></svg>
<div class="t" style="left:1344.10px;top:695.19px;font-size:14px;line-height:20px;color:#444;letter-spacing:0.739px;">gate in of empty equipment at depot</div>
<div style="position:absolute;left:1632px;top:696px;width:36.8px;height:18px;background:#e6e7e9;border-radius:4px;"></div>
<div class="t" style="left:1637.35px;top:696.79px;font-size:12px;line-height:17px;color:#6b7383;letter-spacing:0.250px;font-weight:700;">FOB</div>
<div style="position:absolute;left:1675.1px;top:696px;width:123px;height:18px;background:#e6e7e9;border-radius:4px;"></div>
<div class="t" style="left:1680.96px;top:696.79px;font-size:12px;line-height:17px;color:#6b7383;letter-spacing:0.250px;font-weight:700;">payment is needed</div>
<div style="position:absolute;left:93px;top:726px;width:1801px;height:10px;background:#dedede;"></div>
<div style="position:absolute;left:93px;top:726px;width:694px;height:10px;background:#bbbbbb;border-radius:5px;"></div>
</div></body></html>
